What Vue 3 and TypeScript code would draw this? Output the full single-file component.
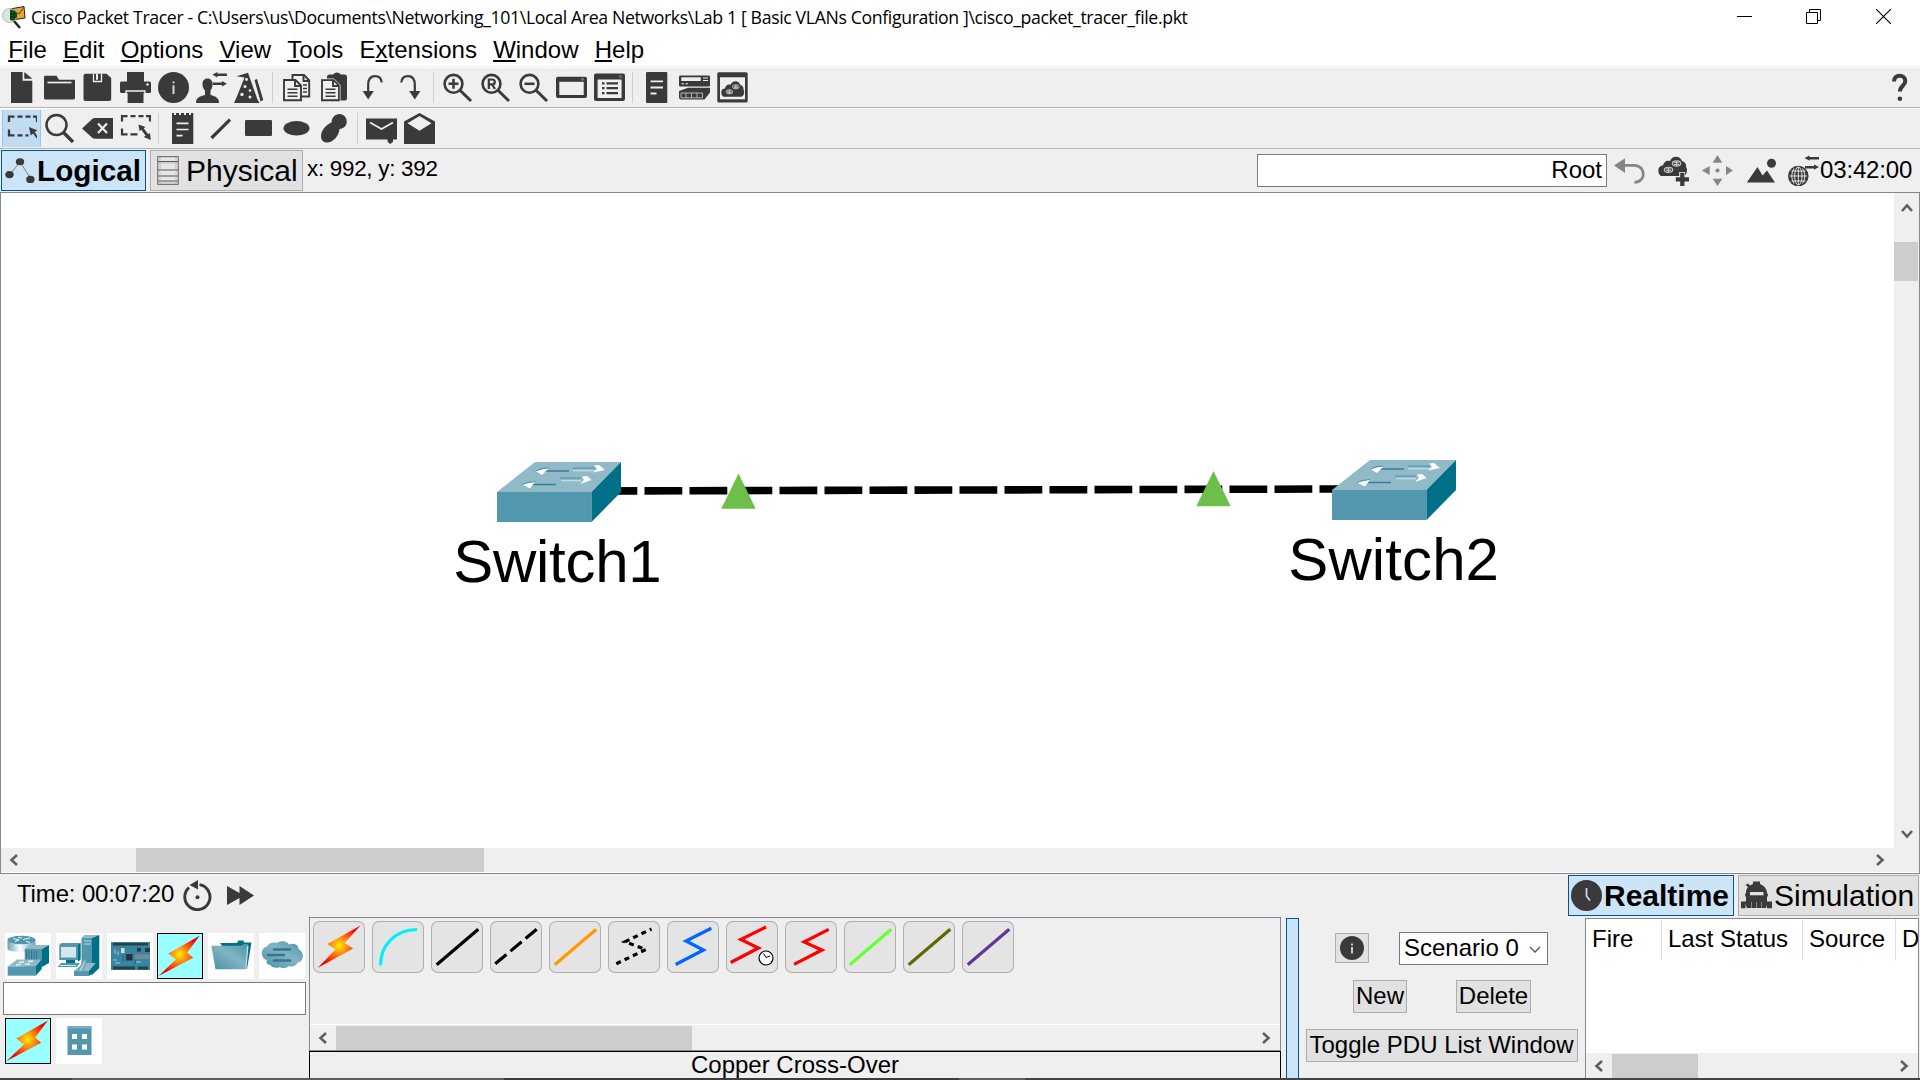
<script setup lang="ts">
interface Tool { id: string; art?: string; active?: boolean }

const D = '#3a3a3c'
const L = '#efefef'

const lens = (inner: string) =>
  `<circle cx="11.5" cy="11.8" r="8.9" fill="none" stroke="${D}" stroke-width="2.6"/><path d="M18 18.2L29 29" stroke="${D}" stroke-width="3"/>${inner}`

const swapArrows = (x: number, y: number) =>
  `<g transform="translate(${x} ${y})"><path d="M0 2.7L5 0V1.500H14.5V4H5V5.4Z M14.5 11.7L9.500 9V10.500H.5V13H9.500V14.400Z" fill="${D}"/></g>`

const cloudShape = (x: number, y: number, s: number) =>
  `<g transform="translate(${x} ${y}) scale(${s})"><path d="M4 20C0 20-.5 13 1.500 11C3 9.500 4 9.500 5 9.500C6 5 9 4 12 5C14-.5 22-1 24 5C28 6 28.500 10 28 11C30 13 29 20 25 20Z" fill="${D}"/><g fill="none" stroke="#c8c8c8" stroke-width="1.100"><ellipse cx="18.500" cy="7.500" rx="4.200" ry="2.600"/><path d="M15.500 6.800H21M16 8.500H21.500M18.500 5V10"/><ellipse cx="10.500" cy="13.800" rx="4.200" ry="2.600"/><path d="M7.500 13H13M8 14.800H13.500M10.500 11.200V16.400"/></g></g>`

const mainTools: Tool[] = [
  { id: 'new', art: `<path d="M5 0H16.600V8.700H26.300V31H5Z M18.300 0L26.300 6.800H18.300Z" fill="${D}"/>` },
  { id: 'open', art: `<path d="M0 5Q0 3.700 1.300 3.700H12.500L15 7.700H31V26Q31 27.400 29.700 27.400H1.300Q0 27.400 0 26Z" fill="${D}"/><path d="M3.500 10.500H27.500" stroke="${L}" stroke-width="1.700"/>` },
  { id: 'save', art: `<path d="M3.500 1.700H24.500L29.200 6V27Q29.200 29 27.200 29H3.500Q1.500 29 1.500 27V3.700Q1.500 1.700 3.500 1.700Z" fill="${D}"/><path d="M11.500 1.700V9.500H19.500V1.700" fill="none" stroke="${L}" stroke-width="1.300"/><path d="M15 1.700V7.700" stroke="${L}" stroke-width="2"/>` },
  { id: 'print', art: `<path d="M7 0H24V9.500H29.500Q31 9.500 31 11V19.500Q31 21 29.500 21H1.500Q0 21 0 19.500V11Q0 9.500 1.500 9.500H7Z" fill="${D}"/><path d="M6 21.500V19H25V21.500" fill="none" stroke="${L}" stroke-width="1.300"/><path d="M7.600 20.500H23.500V31H7.600Z" fill="${D}"/><circle cx="27.500" cy="12.500" r="1.200" fill="${L}"/>` },
  { id: 'info', art: `<circle cx="15.500" cy="15.500" r="15.500" fill="${D}"/><path d="M14.500 9.500H16.500V11.300H14.500ZM14.500 13.300H16.500V22H14.500Z" fill="#d8d8d8"/>` },
  { id: 'user', art: `<path d="M0 31C0 26 3 24.500 9 23V18.500C5.500 15 5 6.500 11.500 6.500S17.500 15 14.500 18.500V23C20 24.500 23 26 23 31Z" fill="${D}"/>${swapArrows(16.4, 0)}` },
  { id: 'wizard', art: `<path d="M2.500 4.300L14 .8L23.500 27.500L25.500 31H0L2.500 25.500L10.500 5.500Z M20.500 8L23 7L29.300 28L26.500 29.500Z" fill="${D}"/><g fill="${L}"><circle cx="12.500" cy="7.500" r="1.400"/><circle cx="11" cy="14.500" r="1.500"/><circle cx="16" cy="18.500" r="1.300"/><circle cx="8" cy="22.500" r="1.700"/><circle cx="16" cy="25" r="1.500"/></g>` },
  { id: 'sep1' },
  { id: 'copy', art: `<g fill="${L}" stroke="${D}" stroke-width="1.900"><path d="M11.500 3H23L28.200 8.500V24.500H11.500Z"/><path d="M22.500 3V9H28" fill="none"/><path d="M22 13H26M22 16.500H26M22 20H26" stroke-width="1.400"/><path d="M3 8H14.500L20 13.500V28.300H3Z"/><path d="M14 8V14H20" fill="none"/><path d="M6.500 17.300H16.500M6.500 20.800H16.500M6.500 24.300H16.500" stroke-width="1.500"/></g>` },
  { id: 'paste', art: `<path d="M8 5Q8 2.500 10.500 2.500H14Q18-1.500 22 2.500H25.500Q28 2.500 28 5V26Q28 28.500 25.500 28.500H8Z" fill="${D}"/><g fill="${L}" stroke="${D}" stroke-width="1.900"><path d="M3 8H14.500L20 13.500V28.300H3Z"/><path d="M14 8V14H20" fill="none"/><path d="M6.500 17.300H16.500M6.500 20.800H16.500M6.500 24.300H16.500" stroke-width="1.500"/></g><path d="M2 6.800H15L21.200 13V29" fill="none" stroke="${L}" stroke-width=".7"/>` },
  { id: 'undo', art: `<path d="M11.200 20V13C11.200 7 14 4.200 18 4.200C22 4.200 24.300 6.500 24.700 10.500" fill="none" stroke="${D}" stroke-width="2.200"/><path d="M5.600 19H16.800L11.200 27.600Z" fill="${D}"/>` },
  { id: 'redo', art: `<path d="M19.800 20V13C19.800 7 17 4.200 13 4.200C9 4.200 6.700 6.500 6.300 10.500" fill="none" stroke="${D}" stroke-width="2.200"/><path d="M14.200 19H25.400L19.800 27.600Z" fill="${D}"/>` },
  { id: 'sep2' },
  { id: 'zoomIn', art: lens(`<path d="M6.500 11.800H16.500M11.500 6.800V16.800" stroke="${D}" stroke-width="2.500"/>`) },
  { id: 'zoomReset', art: lens(`<path d="M8.800 17V7.500H12.200Q14.800 7.500 14.800 9.900T12.200 12.300H9M12 12.300L15 17" fill="none" stroke="${D}" stroke-width="2.200"/>`) },
  { id: 'zoomOut', art: lens(`<path d="M6.500 11.800H16.500" stroke="${D}" stroke-width="2.500"/>`) },
  { id: 'window', art: `<rect x="0" y="4.800" width="31" height="21.200" rx="2" fill="${D}"/><rect x="3.300" y="9.800" width="24.400" height="13.200" fill="${L}"/><circle cx="26.500" cy="7.300" r="1" fill="none" stroke="#aaa" stroke-width=".7"/>` },
  { id: 'list', art: `<rect x="0" y="1.500" width="31" height="27.500" rx="2" fill="${D}"/><rect x="3.600" y="7.500" width="24" height="18.500" fill="${L}"/><path d="M12.500 11.300H24M12.500 16.200H24M12.500 21.200H24M8 11.300H10.500M8 16.200H10.500M8 21.200H10.500" stroke="${D}" stroke-width="2.300"/><circle cx="26.500" cy="4.500" r="1" fill="none" stroke="#aaa" stroke-width=".7"/>` },
  { id: 'sep3' },
  { id: 'doc', art: `<rect x="5" y="0" width="21.300" height="31" rx="1" fill="${D}"/><path d="M9.500 9.300H22M9.500 15.500H22M9.500 21.500H15.500" stroke="${L}" stroke-width="1.800"/>` },
  { id: 'devices', art: `<rect x="0" y="3.500" width="31" height="11" rx="1.300" fill="${D}"/><rect x="2.300" y="5.300" width="19.500" height="3.700" fill="${L}"/><path d="M24 6H29M24 8.500H29" stroke="${L}"/><path d="M2.500 11.800H5M6.500 11.800H9" stroke="${L}"/><path d="M0 19L9 15.700H31L25 19ZM0 19H25L31 15.700V20.500L25.500 27.500H2Q0 27.500 0 25Z" fill="${D}"/><path d="M2 21H23.500V25.800H2ZM7 21V25.800M12.500 21V25.800M18 21V25.800" fill="none" stroke="#c4c4c4" stroke-width=".9"/>` },
  { id: 'cloudWindow', art: `<rect x=".3" y=".3" width="30.400" height="30.200" rx="1.500" fill="${D}"/><rect x="3" y="5.300" width="25" height="22" fill="${L}"/>${cloudShape(4, 8.8, 0.8)}` },
]

const editTools: Tool[] = [
  { id: 'select', active: true, art: `<path d="M3 9V3.700H8.500M11.500 3.700H16.500M19.500 3.700H24.500M27 3.700H31V9M3 16.500V22.300H8.500M11.500 22.300H16.500M19.500 22.300H22.500" fill="none" stroke="${D}" stroke-width="2.300"/><path d="M23 14L31.500 17.500L28.700 19L32 24.500L30.800 25.500L27 20.500L24.800 22.500Z" fill="${D}"/>` },
  { id: 'inspect', art: `<circle cx="12.500" cy="12" r="10" fill="none" stroke="${D}" stroke-width="2.500"/><path d="M19.500 19.500L29 29" stroke="${D}" stroke-width="3.300"/>` },
  { id: 'delete', art: `<path d="M0 15.500L10.500 5.800Q11.500 5 13 5H31V25.800H13Q11.500 25.800 10.500 25Z" fill="${D}"/><path d="M16 10.500L25 20M25 10.500L16 20" stroke="${L}" stroke-width="2.100"/>` },
  { id: 'resize', art: `<path d="M2 8.500V3.200H7.500M10.500 3.200H15.500M18.500 3.200H23.500M26 3.200H30V8.500M2 15.500V21.300H7.500M10.500 21.300H17.500" fill="none" stroke="${D}" stroke-width="2.200"/><path d="M18.500 11.500L25.500 14L23.700 15.300L28.200 21.300L30 20L30.800 27L23.700 24L25.700 22.700L21.300 16.800L19.500 18Z" fill="${D}"/>` },
  { id: 'sep4' },
  { id: 'note', art: `<path d="M5 0H7V2H9V0H12V2H14V0H17V2H19V0H22V2H24V0H26.300V31H5Z" fill="${D}"/><path d="M9.500 10.300H21.500M9.500 16.500H21.500M9.500 22.700H15.500" stroke="${L}" stroke-width="1.700"/>` },
  { id: 'line', art: `<path d="M6.500 25L25 6.700" stroke="${D}" stroke-width="3.200"/>` },
  { id: 'rect', art: `<rect x="2" y="7" width="27" height="16" rx="1.200" fill="${D}"/>` },
  { id: 'ellipse', art: `<ellipse cx="15.500" cy="15.300" rx="13" ry="7.300" fill="${D}"/>` },
  { id: 'freeform', art: `<path d="M20.500 1C25 1 28 5 27.700 9C27.500 13 25 15.500 20.500 16C20 23 14 29.500 8 29.500C4.500 29.500 2 27 2 23.500C2 17.500 7 11.500 12.500 9.500C12.800 4.500 16 1 20.500 1Z" fill="${D}"/>` },
  { id: 'sep5' },
  { id: 'mail', art: `<path d="M0 5.500H31V26.500H27V29L24 31L21.500 28.500V26.500H0Z" fill="${D}"/><path d="M4 9.500L15.500 16L27 9.500" fill="none" stroke="${L}" stroke-width="1.700"/>` },
  { id: 'mailOpen', art: `<path d="M0 8.500L15.500 0L31 8.500V31H0Z" fill="${D}"/><path d="M3.500 10.300L15.500 3L27.500 10.300L15.500 17.800Z" fill="${L}"/>` },
]

const G = '#858585'
const viewTools: Tool[] = [
  { id: 'back', art: `<path d="M0 10.500L11 3.200V18Z" fill="${G}"/><path d="M9 10.300H20.500C32.500 11 32 27.300 20.500 27.300" fill="none" stroke="${G}" stroke-width="2.700"/>` },
  { id: 'newCluster', art: `${cloudShape(0, 1, 1)}<path d="M16.800 24H31.500M24.200 17V31.500" stroke="${L}" stroke-width="6"/><path d="M17.800 24.300H31M24.300 17.800V31" stroke="${D}" stroke-width="4.200"/>` },
  { id: 'move', art: `<path d="M15.500 0L20.300 7.700H10.700ZM15.500 31L20.300 23.800H10.700ZM0 15.500L7.700 11V20ZM31 15.500L24 11V20Z" fill="${G}"/><circle cx="15.500" cy="15.500" r="2" fill="${G}"/>` },
  { id: 'background', art: `<path d="M.8 27.500L11.500 12L16.500 20.500L21 15.500L29 27.500Z" fill="${D}"/><circle cx="25.500" cy="8.300" r="4.500" fill="${D}"/>` },
  { id: 'environment', art: `${swapArrows(16.5, 0.4)}<circle cx="10.300" cy="21" r="10.300" fill="${D}"/><g fill="none" stroke="${L}" stroke-width=".9"><ellipse cx="10.300" cy="21" rx="3.700" ry="9"/><path d="M10.300 12V30M1.500 21H19M3.500 16H17.500M3.500 26H17.500M6 13.500Q1.500 21 6 28.500M14.600 13.500Q19 21 14.600 28.500"/></g>` },
]

const menus = [
  ['', 'F', 'ile'], ['', 'E', 'dit'], ['', 'O', 'ptions'], ['', 'V', 'iew'],
  ['', 'T', 'ools'], ['E', 'x', 'tensions'], ['', 'W', 'indow'], ['', 'H', 'elp'],
]

const B = '#5297ae'
const DK = '#006f88'
const LT = '#91bac9'
const BOLT = 'M43 2.500L11.300 20.500L19 26.300L1.700 43L36.200 24.700L30.200 19.500Z'

const families = [
  { id: 'network', art: `<path d="M2.500 7V16C4 20 28 20 30.500 16V7Z" fill="url(#fade)"/><ellipse cx="16.500" cy="7" rx="14" ry="4.200" fill="${B}"/><path d="M8 5.500L14 7L10 8.500M25 5L18 6.500M21 8.500L25 9.500M13 4.500L17 5" stroke="#e8f3f6" fill="none"/><path d="M19.700 16L24 12H44L37 16Z" fill="${LT}"/><path d="M19.700 16H37V34H19.700Z" fill="${B}"/><path d="M37 16L44 12V30L37 34Z" fill="${DK}"/><path d="M21.500 17.500V27M24 17.500V27M26.500 17.500V27M29 17.500V27M31.500 17.500V27" stroke="#35758b"/><path d="M2.700 33.500L12 26.500H36.700L30.700 33.500Z" fill="${LT}"/><path d="M2.700 33.500H30.700V42.700H2.700Z" fill="${B}"/><path d="M30.700 33.500L36.700 26.500V36L30.700 42.700Z" fill="${DK}"/><path d="M14 29.300L19 29M23 28.500L28 28M11 32L16 31.300M20 31.300L25 31" stroke="#e8f3f6" stroke-width="1.300"/>` },
  { id: 'end', art: `<path d="M25.500 5L28 2H43.300L36 5Z" fill="${LT}"/><path d="M25.500 5H36V42H25.500Z" fill="${B}"/><path d="M36 5L43.300 2V35L36 42Z" fill="${DK}"/><path d="M28 8H35M28 11H35" stroke="#c3dce4"/><path d="M3.300 12L5.500 10H24.500V25L22 27H3.300Z" fill="${B}"/><path d="M22 12L24.500 10V27L22 28.500Z" fill="${DK}"/><rect x="5" y="14" width="15" height="10.500" fill="#d5e7ec"/><path d="M10 27H19V30H10Z" fill="${DK}"/><path d="M1.500 34L5 30H24L21 34Z" fill="${B}"/><path d="M4 32.500H20" stroke="#d5e7ec"/><path d="M18 38L27 30H40L33 38Z" fill="${LT}"/><path d="M18 38H33V43H18Z" fill="${B}"/><path d="M33 38L40 30V37L33 43Z" fill="${DK}"/><path d="M22 38L28 27Q30 25 30 29L26 39Z" fill="#a8cad6" stroke="${B}"/>` },
  { id: 'components', art: `<rect x="4" y="9" width="39" height="28" fill="#3785a0"/><path d="M6 10H41V12.500H6ZM6 33.500H28V36.500H6ZM31 33.500H41V36.500H31Z" fill="#283f49"/><rect x="19" y="21" width="6.500" height="6.500" fill="#25333a"/><rect x="14" y="15" width="3.500" height="5" fill="#d9d9d9"/><rect x="30" y="15" width="4" height="3.500" fill="#2b373d"/><rect x="38" y="15" width="5" height="4" fill="#2b373d"/><rect x="28" y="21.500" width="14.500" height="4.500" fill="#778b93"/><path d="M8 16V21M11 18V22M6 27H10M8 30H13M29 29H34" stroke="#9ccbd9"/><path d="M16 22V28M28 27V31" stroke="#275b70"/>` },
  { id: 'connections', bolt: true, active: true },
  { id: 'misc', art: `<path d="M12 10H29L30.500 7.500H35.500L36 9.500H43.500L39 36H30Z" fill="${DK}"/><path d="M3.300 12.700H33L36 11H40L38 36.300H7.500Z" fill="url(#sheen)"/><path d="M39 13H40.500L38.500 36H37.500Z" fill="#c8dde4"/>` },
  { id: 'cloud', art: `<path d="M8 27C2 26 .5 15 8 13.500C11 8 17 9.500 18 10C22 6.500 29 8.500 30 11.500C36 9 40 13 39.500 16C46 19 45 29 39 29.500C36 34 32 34 30 33C26 36.500 22 35 21 34C17 36 12 34 11.500 32C7 31.500 7 29 8 27Z" fill="url(#sheen)"/><path d="M15 16.500H31M9 22H25M15 27.500H31" stroke="#36758b" stroke-width="2.600" stroke-linecap="round"/>` },
]
const subFamilies = [
  { id: 'bolt', bolt: true, active: true },
  { id: 'structured', art: `<rect x="11.500" y="8" width="24" height="29" fill="${B}"/><rect x="11.500" y="8" width="24" height="2.500" fill="#80adbd"/><g fill="#fff"><rect x="16" y="16" width="5" height="5"/><rect x="26" y="16" width="5" height="5"/><rect x="16" y="26.500" width="5" height="5"/><rect x="26" y="26.500" width="5" height="5"/></g>` },
]

interface Cable { id: string; d: string; color: string; dash?: string; clock?: boolean; bolt?: boolean }
const straight = 'M5.700 43.700L47.300 8.300'
const cables: Cable[] = [
  { id: 'auto', d: 'M47.500 4.500L14.500 23L22.500 28.500L4.500 47L40.200 27.500L31.500 22Z', color: '', bolt: true },
  { id: 'console', d: 'M8.500 44.300C8.500 25 22 9 45 8.500', color: '#00f0ff' },
  { id: 'straight', d: straight, color: '#000' },
  { id: 'crossover', d: 'M5.300 42.700L46.700 8.300', color: '#000', dash: '14.500 5.200' },
  { id: 'fiber', d: straight, color: '#ff9900' },
  { id: 'phone', d: 'M8.300 42.700L38 28.500L17 20.700L43.500 8', color: '#000', dash: '5 4.200' },
  { id: 'coaxial', d: 'M8.700 43.500L36.500 29L19 20L44.300 7.300', color: '#0066ff' },
  { id: 'serialDce', d: 'M4.700 41.500L32.500 27L14.800 18.500L40 6', color: '#ff0000', clock: true },
  { id: 'serialDte', d: 'M9 43.300L37 29L19 21L43.700 8.300', color: '#ff0000' },
  { id: 'octal', d: straight, color: '#66ff33' },
  { id: 'iot', d: straight, color: '#666600' },
  { id: 'usb', d: straight, color: '#663399' },
]

const nodes = [
  { name: 'Switch1', x: 497, y: 462, labelX: 453.3, baseline: 582, spacing: -0.3 },
  { name: 'Switch2', x: 1332, y: 460, labelX: 1288.3, baseline: 580, spacing: 0.1 },
]
const ports = [{ x: 738.5, y: 473.5 }, { x: 1213.5, y: 471 }]
</script>

<template>
  <div class="app">
    <svg class="defs" width="0" height="0">
      <defs>
        <radialGradient id="spark" cx=".5" cy=".47" r=".5">
          <stop offset="0" stop-color="#ffee00" /><stop offset=".38" stop-color="#ff8c10" />
          <stop offset=".72" stop-color="#ff3a08" /><stop offset="1" stop-color="#f50000" />
        </radialGradient>
        <linearGradient id="fade"><stop offset="0" stop-color="#6ba5b8" /><stop offset=".45" stop-color="#fff" /><stop offset="1" stop-color="#6ba5b8" /></linearGradient>
        <linearGradient id="sheen" x1="0" y1="1" x2="1" y2="0"><stop offset="0" stop-color="#4790a9" /><stop offset=".55" stop-color="#83b4c4" /><stop offset="1" stop-color="#4a93ab" /></linearGradient>
      </defs>
    </svg>

    <header class="titlebar">
      <svg class="logo" width="24" height="24" viewBox="0 0 24 24">
        <path d="M8 3L22 .5L23 12L10 14Z" fill="#e2a63a" stroke="#2c2410" /><path d="M9 3L17 8L22 1" fill="none" stroke="#52421b" />
        <circle cx="7.500" cy="9.500" r="7" fill="#dce5e0" stroke="#b5bdb9" /><path d="M8 3.500C12 3 16 6 15 11L11 15L8 14Z" fill="#12651c" /><path d="M9 5V14M12 5V14M8 8H15M8 11H15" stroke="#021" stroke-width=".8" />
        <path d="M12 15L18 22" stroke="#222" stroke-width="2.500" />
      </svg>
      <span class="title">Cisco Packet Tracer - C:\Users\us\Documents\Networking_101\Local Area Networks\Lab 1 [ Basic VLANs Configuration ]\cisco_packet_tracer_file.pkt</span>
      <div class="window-controls">
        <svg width="15" height="15"><path d="M0 7.500H15" stroke="#000" /></svg>
        <svg width="15" height="15"><path d="M.5 3.500H11.500V14.500H.5ZM3.500 3.500V.5H14.500V11.500H11.500" fill="none" stroke="#000" /></svg>
        <svg width="15" height="15"><path d="M0 0L15 15M15 0L0 15" stroke="#000" stroke-width="1.100" /></svg>
      </div>
    </header>

    <nav class="menubar">
      <span v-for="m in menus" :key="m[1]" class="menu">{{ m[0] }}<u>{{ m[1] }}</u>{{ m[2] }}</span>
    </nav>

    <div class="toolbar main-tools">
      <template v-for="t in mainTools" :key="t.id">
        <svg v-if="t.art" class="tool" width="31" height="31" viewBox="0 0 31 31" v-html="t.art" />
        <i v-else class="sep" />
      </template>
      <svg class="help" width="31" height="31" viewBox="0 0 31 31"><path d="M10 9.500C10 1.500 21.300 2 21.300 9C21.300 14 15.900 13.500 15.900 19.500" fill="none" stroke="#3a3a3c" stroke-width="4" /><circle cx="15.900" cy="26.700" r="2.300" fill="#3a3a3c" /></svg>
    </div>

    <div class="toolbar edit-tools">
      <template v-for="t in editTools" :key="t.id">
        <span v-if="t.art" class="tool" :class="{ active: t.active }"><svg width="31" height="31" viewBox="0 0 31 31" v-html="t.art" /></span>
        <i v-else class="sep" />
      </template>
    </div>

    <div class="viewbar">
      <button class="tab on logical">
        <svg width="30" height="26" viewBox="0 0 30 26"><path d="M4.500 17L15 4L26 21" fill="none" stroke="#666" stroke-width=".8" /><ellipse cx="15" cy="3.700" rx="4.200" ry="3.500" fill="#3a3a3c" /><ellipse cx="4.500" cy="16.600" rx="4.200" ry="3.600" fill="#3a3a3c" /><ellipse cx="25.400" cy="21.400" rx="4.200" ry="3.700" fill="#3a3a3c" /></svg>
        Logical
      </button>
      <button class="tab physical">
        <svg width="22" height="29" viewBox="0 0 22 29"><path d="M.7.700H21.300V28.300H.7Z" fill="#e6e6e6" stroke="#777" stroke-width="1.200" /><path d="M1 5.500H21M1 14H21M1 20H21M1 25H21" stroke="#555" /><path d="M1 7H21M1 26H21M3 1V28M19 1V28" stroke="#aaa" stroke-width=".7" /></svg>
        Physical
      </button>
      <span class="coords">x: 992, y: 392</span>
      <div class="root-path">Root</div>
      <div class="view-tools">
        <svg v-for="t in viewTools" :key="t.id" width="31" height="31" viewBox="0 0 31 31" v-html="t.art" />
      </div>
      <span class="clock">03:42:00</span>
    </div>

    <main class="workspace">
      <svg class="canvas" width="1893" height="655" viewBox="1 193 1893 655">
        <line x1="599.500" y1="491" x2="1340" y2="489" stroke="#000" stroke-width="7.600" stroke-dasharray="37.800 7.200" />
        <g v-for="n in nodes" :key="n.name">
          <g :transform="`translate(${n.x} ${n.y})`">
            <path d="M0 30L38 0H124L94.500 30Z" fill="#91bac9" />
            <path d="M0 30H94.500V60H0Z" fill="#5297ae" />
            <path d="M94.500 30L124 0V30L94.500 60Z" fill="#006f88" />
            <g stroke-width="1.300">
              <path d="M48 9H72M34 22.500H59" stroke="#377f97" />
              <path d="M63 15H84V17.500H63ZM76 5H98V7.500H76Z" fill="#70a3b5" stroke="none" />
              <path d="M64 18.500H84M76 8.500H98" stroke="#c3dce4" />
              <path d="M52 6L38.500 9L45 13L48 10L50 8ZM38 19.500L25 22.500L33 26.500L36 22.500ZM97 3.500L102 3L108 8L96 10.500L100 7ZM85 14.500L90 14L94.500 18L83 22L87 18Z" fill="#fff" />
              <path d="M38.500 9L45 6.500L52 6M25 22.500L31 20.500L38 19.500" fill="none" stroke="#377f97" stroke-width=".8" />
            </g>
          </g>
          <text :x="n.labelX" :y="n.baseline" :letter-spacing="n.spacing" class="node-label">{{ n.name }}</text>
        </g>
        <path v-for="p in ports" :key="p.x" :d="`M${p.x} ${p.y}l17.200 35.200h-34.400Z`" fill="#6cbf4b" />
      </svg>
      <div class="vscroll">
        <svg width="12" height="9"><path d="M1 8L6 2.500L11 8" /></svg>
        <i class="thumb" />
        <svg class="end" width="12" height="9"><path d="M1 1L6 6.500L11 1" /></svg>
      </div>
      <div class="hscroll work-scroll">
        <svg width="9" height="12"><path d="M8 1L2.500 6L8 11" /></svg>
        <i class="thumb" />
        <svg class="end" width="9" height="12"><path d="M1 1L6.500 6L1 11" /></svg>
      </div>
      <div class="corner" />
    </main>

    <div class="timebar">
      <span class="time">Time: 00:07:20</span>
      <svg class="reset" width="29" height="31" viewBox="0 0 29 31"><path d="M16.500 4.600A12.600 12.600 0 1 1 6 7.600" fill="none" stroke="#3a3a3c" stroke-width="2.900" /><path d="M15 0V9.500L6.500 5Z" fill="#3a3a3c" /><circle cx="14.500" cy="17.200" r="2" fill="#3a3a3c" /></svg>
      <svg width="27" height="19" viewBox="0 0 27 19"><path d="M0 0L12.500 7V0L27 9.500L12.500 19V12L0 19Z" fill="#3a3a3c" /></svg>
      <button class="tab on realtime">
        <svg width="31" height="31" viewBox="0 0 31 31"><circle cx="15.500" cy="15.500" r="15.500" fill="#3a3a3c" /><path d="M15.500 8V16L19 20.500" fill="none" stroke="#cbd8e4" stroke-width="1.800" /></svg>
        Realtime
      </button>
      <button class="tab simulation">
        <svg width="31" height="31" viewBox="0 0 31 31"><path d="M4.500 5L7 3.500L9 5.500L12 4V1.500H19V4L22 5.500Q26 9 26 13Q28 15 26 17V21Q27 24 25 28H6Q3.500 23 5 20V17Q3 15 5 13Q5 9 7 7Z M0 21.500H4.500V28.300H0ZM26 21.500H31V28.300H26Z" fill="#3a3a3c" /><rect x="9" y="12" width="13.500" height="3.300" fill="#e1e1e1" /><path d="M10.500 22V28M15.500 22V28M20.500 22V28" stroke="#aaa" stroke-width=".7" /></svg>
        Simulation
      </button>
    </div>

    <div class="dock">
      <section class="devices">
        <div class="row">
          <div v-for="f in families" :key="f.id" class="device" :class="{ picked: f.active }">
            <svg v-if="f.bolt" width="46" height="46" viewBox="0 0 46 46"><path :d="BOLT" fill="url(#spark)" /></svg>
            <svg v-else width="46" height="46" viewBox="0 0 46 46" v-html="f.art" />
          </div>
        </div>
        <div class="search" />
        <div class="row">
          <div v-for="f in subFamilies" :key="f.id" class="device" :class="{ picked: f.active }">
            <svg v-if="f.bolt" width="46" height="46" viewBox="0 0 46 46"><path :d="BOLT" fill="url(#spark)" /></svg>
            <svg v-else width="46" height="46" viewBox="0 0 46 46" v-html="f.art" />
          </div>
        </div>
      </section>

      <section class="cables">
        <div class="cable-box">
          <div class="cable-row">
            <div v-for="c in cables" :key="c.id" class="cable">
              <svg width="52" height="52" viewBox="0 0 52 52">
                <path v-if="c.bolt" :d="c.d" fill="url(#spark)" />
                <path v-else :d="c.d" fill="none" :stroke="c.color" stroke-width="3.200" :stroke-dasharray="c.dash" />
                <g v-if="c.clock"><circle cx="40" cy="37" r="7" fill="#fff" stroke="#000" stroke-width="1.200" /><path d="M37.500 32.500L40 36.500L44 35" fill="none" stroke="#000" /></g>
              </svg>
            </div>
          </div>
          <div class="hscroll cable-scroll">
            <svg width="9" height="12"><path d="M8 1L2.500 6L8 11" /></svg>
            <i class="thumb" />
            <svg class="end" width="9" height="12"><path d="M1 1L6.500 6L1 11" /></svg>
          </div>
        </div>
        <div class="cable-name">Copper Cross-Over</div>
      </section>

      <div class="splitter" />

      <section class="scenario">
        <div class="line first">
          <button class="info"><svg width="24" height="24" viewBox="0 0 24 24"><circle cx="12" cy="12" r="12" fill="#3a3a3c" /><path d="M11 7.500H13V9.500H11ZM11 11H13V17.500H11Z" fill="#ccc" /></svg></button>
          <div class="combo">Scenario 0<svg width="12" height="8"><path d="M1 1L6 6L11 1" fill="none" stroke="#555" stroke-width="1.300" /></svg></div>
        </div>
        <div class="line second"><button>New</button><button class="del">Delete</button></div>
        <div class="line third"><button>Toggle PDU List Window</button></div>
      </section>

      <section class="pdu">
        <div class="head"><span class="c1">Fire</span><span class="c2">Last Status</span><span class="c3">Source</span><span class="c4">D</span></div>
        <div class="hscroll pdu-scroll">
          <svg width="9" height="12"><path d="M8 1L2.500 6L8 11" /></svg>
          <i class="thumb" />
          <svg class="end" width="9" height="12"><path d="M1 1L6.500 6L1 11" /></svg>
        </div>
      </section>
    </div>
    <footer class="edge"><i class="e1" /><i class="e2" /><i class="e3" /><i class="e4" /></footer>
  </div>
</template>

<style>
body { margin: 0; overflow: hidden; }
</style>

<style scoped>
* { box-sizing: border-box; }
.app {
  width: 1920px; height: 1080px; display: flex; flex-direction: column; overflow: hidden;
  background: #efefef; color: #000; font: 24px/30px "Liberation Sans", Arial, sans-serif; white-space: nowrap;
}
.defs { position: absolute; }
svg { display: block; flex: none; }
button { font: inherit; color: inherit; padding: 0; margin: 0; background: #e1e1e1; border: 1px solid #adadad; border-radius: 0; }

.titlebar { height: 35px; flex: none; display: flex; align-items: center; background: #fff; padding-left: 2px; }
.logo { margin-right: 5px; }
.title { font: 17.700px/34px "Open Sans", "Noto Sans", sans-serif; letter-spacing: -0.367px; padding-bottom: 2px; }
.window-controls { margin-left: auto; display: flex; gap: 55px; padding: 0 29px 2px 0; }
.window-controls svg:first-child { margin-right: -1px; }

.menubar { height: 33px; flex: none; display: flex; gap: 16.200px; padding-left: 8.200px; background: #fff; border-bottom: 1px solid #fff; box-shadow: inset 0 -1px #efefef; }
.menu u { text-decoration-thickness: 2px; text-underline-offset: 2px; text-decoration-skip-ink: none; }

.toolbar { flex: none; display: flex; gap: 7px; padding-left: 6px; }
.main-tools { height: 40px; padding-top: 4px; border-bottom: 1px solid #b4b4b4; }
.edit-tools { height: 41px; padding-top: 4px; border-top: 1px solid #fff; border-bottom: 1px solid #b4b4b4; }
.sep { width: 1px; height: 31px; background: #cfcfcf; margin-right: 1px; }
.help { margin-left: auto; margin-right: 5px; }
.edit-tools .tool { width: 31px; height: 31px; }
.edit-tools .active { background: #c0dcf3; box-shadow: 0 0 0 3px #c0dcf3, 0 0 0 4px #90c8f6; clip-path: inset(-3px -4px -3px -4px); }

.viewbar { height: 43px; flex: none; display: flex; align-items: flex-start; padding: 1px 0 0 1px; }
.tab { height: 41px; display: flex; align-items: center; font-size: 30px; line-height: 39px; }
.on { background: #cce4f7; border-color: #005499; font-weight: bold; }
.logical { width: 145px; padding-left: 3px; gap: 2px; margin-right: 4px; font-size: 29.700px; }
.physical { width: 153px; padding-left: 6px; gap: 7px; }
.coords { font-size: 22.400px; line-height: 38px; margin-left: 4px; letter-spacing: -0.270px; }
.root-path { margin: 4px 0 0 auto; width: 350px; height: 33px; background: #fff; border: 1px solid #7a7a7a; text-align: right; padding-right: 4px; line-height: 30px; }
.view-tools { display: flex; gap: 13px; padding: 5px 0 0 7px; }
.view-tools svg:last-child { margin-left: -2px; }
.clock { line-height: 39px; width: 100px; margin-left: 1px; letter-spacing: -0.150px; }

.workspace { height: 682px; flex: none; display: grid; grid-template: 655px 25px / 1893px 25px; border: 1px solid #828790; background: #fff; }
.node-label { font-size: 60px; }
.vscroll { background: #efefef; display: flex; flex-direction: column; align-items: center; padding: 10px 0 9px; }
.vscroll .thumb { width: 24px; height: 39px; background: #cdcdcd; margin: 30px 1px 0 0; }
.hscroll { height: 24px; background: #efefef; display: flex; align-items: center; padding: 0 9px 0 8px; }
.hscroll path, .vscroll path { fill: none; stroke: #5f5f5f; stroke-width: 2.600; }
.hscroll .thumb { height: 24px; background: #cdcdcd; }
.hscroll .end { margin-left: auto; }
.vscroll .end { margin-top: auto; }
.work-scroll .thumb { width: 348px; margin-left: 118px; }
.corner { height: 24px; background: #efefef; }

.timebar { height: 43px; flex: none; display: flex; align-items: flex-start; padding: 1px 0 0 17px; }
.time { line-height: 38px; width: 166px; letter-spacing: -0.150px; }
.reset { margin: 5px 15px 0 0; }
.reset + svg { margin-top: 11px; }
.realtime { margin-left: auto; width: 166px; padding-left: 2px; gap: 2px; margin-right: 4px; }
.simulation { width: 181px; padding-left: 2px; gap: 2px; margin-right: 1px; }

.dock { height: 161px; flex: none; display: flex; align-items: flex-start; }
.devices { width: 309px; padding: 16px 0 0 3px; }
.row { display: flex; gap: 5px; padding-left: 2px; }
.device { width: 46px; height: 46px; background: #fff; }
.picked { background: #99ffff; outline: 1px solid #000; outline-offset: -1px; }
.device + .picked { margin-left: -1px; }
.search { width: 303px; height: 33px; margin: 3px 0; background: #fff; border: 1px solid #7a7a7a; }
.cables { width: 972px; }
.cable-box { height: 134px; border: 1px solid #828790; padding-top: 3px; }
.cable-row { display: flex; gap: 7px; padding-left: 3px; height: 103px; }
.cable { width: 52px; height: 52px; background: #e4e4e4; border-radius: 7px; box-shadow: inset 0 0 0 1px #b0b0b0; }
.cable-scroll { border-top: 1px solid #fff; height: 26px; }
.cable-scroll .thumb { width: 356px; margin-left: 9px; }
.cable-name { height: 27px; border: 1px solid #000; border-bottom: 0; text-align: center; line-height: 26px; }
.splitter { width: 13px; height: 160px; margin: 1px 0 0 5px; background: #cce4f7; border: 1px solid #005499; border-bottom: 0; }
.scenario { width: 286px; padding: 15px 0 0 7px; }
.line { display: flex; align-items: center; }
.first { padding-left: 29px; gap: 30px; height: 33px; }
.info { width: 34px; height: 30px; display: grid; place-items: center; margin-top: -1px; }
.combo { width: 149px; height: 33px; background: #fff; border: 1px solid #7a7a7a; padding: 0 0 1px 4px; line-height: 30px; display: flex; align-items: center; gap: 10px; }
.combo svg { margin-top: 3px; }
.second { margin-top: 15px; padding-left: 47px; gap: 49px; }
.line button:not(.info) { height: 33px; width: 54px; line-height: 29px; padding-bottom: 2px; }
.line .del:not(.info) { width: 75px; }
.third { margin-top: 16px; }
.third button:not(.info) { width: 272px; padding-right: 1px; }
.pdu { width: 334px; height: 160px; margin-top: 1px; background: #fff; border: 1px solid #828790; border-bottom: 0; display: flex; flex-direction: column; justify-content: space-between; }
.head { display: flex; height: 41px; line-height: 39px; overflow: hidden; }
.head span { border-right: 1px solid #e0e0e0; padding-left: 6px; flex: none; }
.head .c1 { width: 76px; } .head .c2 { width: 141px; } .head .c3 { width: 93px; } .head .c4 { width: 30px; border: 0; }
.pdu-scroll { height: 25px; }
.pdu-scroll .thumb { width: 86px; margin-left: 9px; }
.edge { height: 2px; display: flex; background: #444; }
.e1 { width: 72px; background: #444; } .e2 { width: 432px; background: #5c5c5c; } .e3 { width: 455px; background: #3b3b3b; } .e4 { width: 66px; background: #606060; }
</style>
